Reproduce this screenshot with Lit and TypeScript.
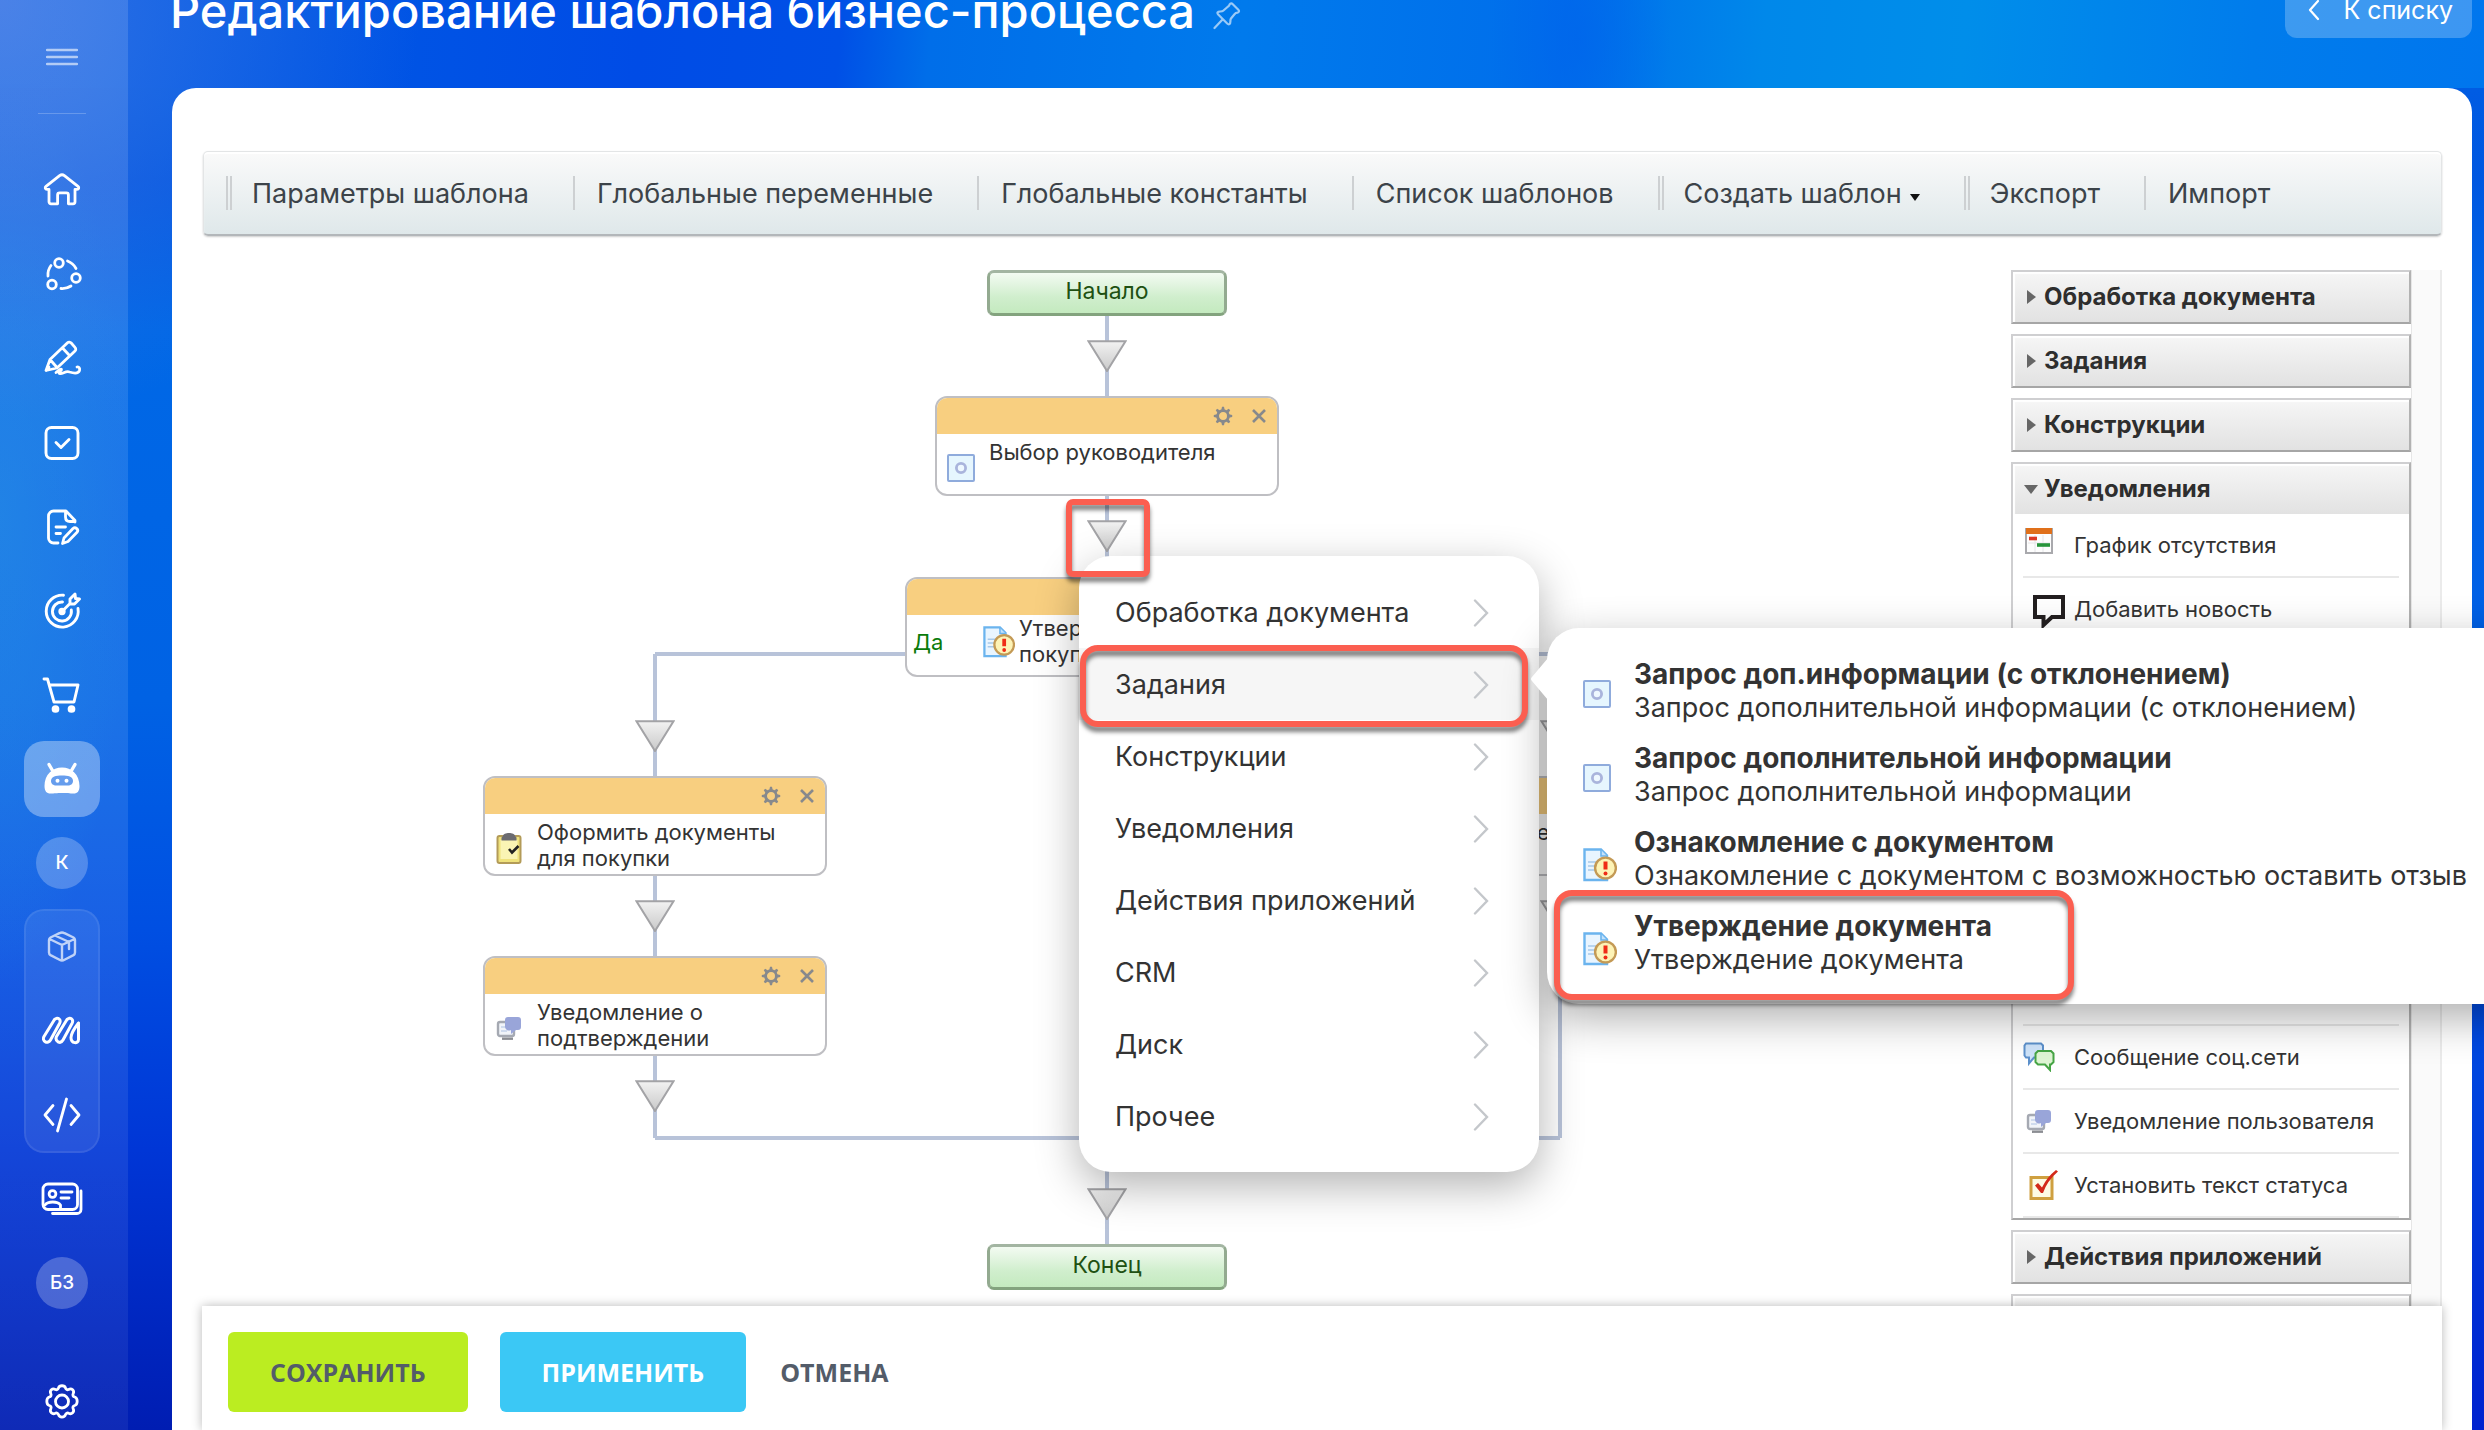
import { LitElement, html, svg, css, nothing, TemplateResult } from "lit";
import { customElement, property } from "lit/decorators.js";
import { classMap } from "lit/directives/class-map.js";
import { styleMap } from "lit/directives/style-map.js";

/* ---------- icon artwork ---------- */

const line = (box: string, w: number, h: number, body: unknown, stroke = 2) => html`
  <svg viewBox=${box} width=${w} height=${h} fill="none" stroke="currentColor" stroke-width=${stroke}
    stroke-linecap="round" stroke-linejoin="round" aria-hidden="true">${body}</svg>`;

const NAV: Record<string, TemplateResult> = {
  home: line("0 0 40 40", 40, 40, svg`<path d="M17.6 4.6a4 4 0 0 1 4.8 0L36 15.4c1.4 1.2.8 3-1 3h-2v12.4a2 2 0 0 1-2 2h-4.6v-9a2 2 0 0 0-2-2h-6.8a2 2 0 0 0-2 2v9H9a2 2 0 0 1-2-2V18.400H5c-1.800 0-2.400-1.800-1-3z"/>`, 2.800),
  share: line("0 0 40 40", 40, 40, svg`<circle cx="17" cy="8" r="4.300"/><circle cx="34" cy="23" r="4.300"/><circle cx="10" cy="29.500" r="4.300"/><path d="M9 10.500A15 15 0 0 0 6 21M25.500 6A16 16 0 0 1 34 13.500M19 33.500a16 16 0 0 0 10-2.500"/>`, 2.800),
  sign: line("0 0 40 40", 40, 40, svg`<path d="M25.500 3.800 8 20.500 4 31.500 15 29 33 12a2.500 2.500 0 0 0 0-3.600L29.200 4a2.600 2.600 0 0 0-3.700-.200zM20.500 9l7 7.500M8 20.500l7 8M4 31.500 7 28"/><path d="M14 33.500c3.500-3 5-4 5.500-3 .500 1.300-4 3-2 4 3 1 6-3 10-1.500 5 1.500 9 1.500 10-1.500.600-2-.500-4-2.500-3.500"/>`, 2.800),
  task: line("0 0 40 40", 40, 40, svg`<rect x="4" y="4.500" width="32" height="31" rx="5.500"/><path d="m14 19.500 5 5 8-8"/>`, 2.900),
  doc: line("0 0 40 40", 40, 40, svg`<path d="M16 36h-4.500A5 5 0 0 1 6.500 31V9a5 5 0 0 1 5-5H24l9 9.500v1.500M23.500 4.500V10c0 3 1.500 4.500 4.500 4.500h5M14 20h9.500M14 26.500h4.500"/><path d="m22 31 9-9.500c2.500-2.200 6.200 1.300 4 3.800L26 34.500 20.500 36.500z"/>`, 2.800),
  target: line("0 0 40 40", 40, 40, svg`<path d="M21.500 4.200A16 16 0 1 0 36 17.500"/><path d="M20.500 11A9.500 9.500 0 1 0 29.300 19"/><path d="m20 20.500 8-8V8l5-5 .500 4.500 4 .500-5 5h-4.500"/><circle cx="20" cy="20.500" r="2.200" fill="currentColor"/>`, 2.900),
  cart: line("0 0 40 40", 40, 40, svg`<path d="M2 4h3.500L12 27h20l4-17H8"/><circle cx="13.500" cy="34" r="2.400" fill="currentColor"/><circle cx="29.500" cy="34" r="2.400" fill="currentColor"/>`, 2.900),
  robot: html`<svg viewBox="0 0 40 40" width="40" height="40" aria-hidden="true">
    <path d="M7 5.500l3.500 6M33 5.500l-3.500 6" stroke="#fff" stroke-width="3.400" stroke-linecap="round"/>
    <path d="M20 8.500c9.500 0 17.500 7 17.500 18.500 0 5-2 7.500-6 7.500-4 0-6-.500-11.500-.500s-7.500.500-11.500.500c-4 0-6-2.500-6-7.500C2.500 15.500 10.500 8.500 20 8.500z" fill="#fff"/>
    <path d="M20 16.500c6 0 11 1 11 5.500 0 3-2.500 4.500-5 4.500H14c-2.500 0-5-1.500-5-4.500 0-4.500 5-5.500 11-5.500z" fill="#669ded"/>
    <circle cx="15.500" cy="21.800" r="2" fill="#fff"/><circle cx="24.500" cy="21.800" r="2" fill="#fff"/></svg>`,
  box: line("0 0 40 40", 40, 40, svg`<path d="M17.500 6.200 8.500 10.500A3 3 0 0 0 7 13v12.500a3 3 0 0 0 1.500 2.600l9 4.700a5 5 0 0 0 5 0l9-4.700a3 3 0 0 0 1.500-2.600V13a3 3 0 0 0-1.500-2.500l-9-4.300a5 5 0 0 0-5 0zM7.500 12l12.500 6 12.500-6M20 18v15M13 8.500l14 6.500v7"/>`, 2.400),
  wave: line("0 0 40 40", 40, 40, svg`<path d="M12.500 8.500c3.500-3 7 0 5 4L8.500 29c-2.500 4.500-9 1.500-6.500-3.500zM25 8.500c3.500-3 7 0 5 4L21 29c-2.500 4.500-8.500 1.500-6.500-3.500zM36.500 12v16.500c0 4.500-7.500 4.500-7.500-2 0-4 2.500-8 7.500-14.500"/>`, 3),
  code: line("0 0 40 40", 40, 40, svg`<path d="M11 10.500 3 20l8 9.500M29 10.500 37 20l-8 9.500M24.500 4 15.500 36"/>`, 2.800),
  card: line("0 0 44 40", 44, 40, svg`<rect x="3" y="5" width="34.500" height="25.500" rx="5"/><path d="M12.500 34.500H37a4 4 0 0 0 4-4V12"/><circle cx="12.500" cy="15" r="3.400"/><path d="M5 26c3-4 12.500-4 15.500 0v4M21 13h11M21 19h8"/>`, 2.800),
  gear: line("0 0 40 40", 40, 40, svg`<path d="M16.500 6c1-3 6-3 7 0 .400 1.500 1.800 2.200 3.200 1.400 3-1.600 6 1.400 4.500 4.300-.800 1.500 0 2.900 1.500 3.300 3.300 1 3.300 7.500 0 8.500-1.500.400-2.300 1.800-1.500 3.300 1.500 3-1.500 6-4.500 4.500-1.400-.800-2.800 0-3.200 1.400-1 3.300-6 3.300-7 0-.400-1.400-1.800-2.200-3.200-1.400-3 1.500-6-1.500-4.500-4.500.800-1.500 0-2.900-1.500-3.300-3.300-1-3.300-7.500 0-8.500 1.500-.400 2.300-1.800 1.500-3.300-1.500-2.900 1.500-5.900 4.500-4.300C14.700 8.200 16.100 7.500 16.500 6z"/><circle cx="20" cy="19.500" r="6.500"/>`, 2.800),
};

const GLYPH: Record<string, TemplateResult> = {
  form: html`<svg viewBox="0 0 28 28" width="28" height="28" aria-hidden="true">
    <rect x="1" y="1" width="26" height="26" rx="1" fill="#e6f6fe" stroke="#8fabdc" stroke-width="2"/>
    <circle cx="14" cy="14" r="4.600" fill="#eef8ff" stroke="#a9b4dc" stroke-width="2.800"/></svg>`,
  approve: html`<svg viewBox="0 0 34 34" width="34" height="34" aria-hidden="true">
    <path d="M1.500 1.500H18l6 6V32H1.500z" fill="#e9f5ff" stroke="#6bb4ee" stroke-width="2.400"/>
    <path d="M18 2v6h6" fill="#c4e2fb" stroke="#6bb4ee" stroke-width="1.600"/>
    <path d="M5 14h9M5 18h7M5 22h7" stroke="#a7c9ea" stroke-width="1.600"/>
    <circle cx="22.500" cy="20" r="10.400" fill="#fdf3b6" stroke="#c49a55" stroke-width="2.400"/>
    <path d="M22.500 13.500v8" stroke="#ef2c16" stroke-width="4"/><circle cx="22.500" cy="25.500" r="2" fill="#ef2c16"/></svg>`,
  clip: html`<svg viewBox="0 0 28 32" width="28" height="32" aria-hidden="true">
    <rect x="2.500" y="4" width="23" height="27" rx="2" fill="#efe27c" stroke="#b39b58" stroke-width="2"/>
    <rect x="5.500" y="8" width="17" height="19" fill="#faf4b4"/>
    <path d="M8 4c0-4 12-4 12 0l1.500 1.500v3h-15v-3z" fill="#6b6b70"/>
    <path d="m14 17 3 3.500 6.500-6.500" fill="none" stroke="#222" stroke-width="2.600"/></svg>`,
  notify: html`<svg viewBox="0 0 26 24" width="26" height="24" aria-hidden="true">
    <rect x="2" y="6" width="16" height="14" rx="2" fill="#f1f4f9" stroke="#a5a9b2" stroke-width="2.400"/>
    <path d="M6 22.700h11" stroke="#8b8d92" stroke-width="2.400"/>
    <path d="M5 11h7M5 15h6" stroke="#c4d2ea" stroke-width="1.600"/>
    <path d="M12 1h10a3 3 0 0 1 3 3v7a3 3 0 0 1-3 3h-2l-5 4v-4a4 4 0 0 1-6-3V4a3 3 0 0 1 3-3z" fill="#99a5d9"/></svg>`,
  calendar: html`<svg viewBox="0 0 28 26" width="28" height="26" aria-hidden="true">
    <rect x="1" y="1" width="26" height="24" fill="#fdfdfd" stroke="#a9a9ad" stroke-width="2"/>
    <path d="M1 0h26v6H1z" fill="#e0701a"/><path d="M3 15h22M10 7v17M18 7v17" stroke="#e5e5e8"/>
    <path d="M4 10.500h8" stroke="#dc3a24" stroke-width="3.600"/><path d="M12 17h13" stroke="#28953b" stroke-width="3.600"/></svg>`,
  news: html`<svg viewBox="0 0 32 34" width="32" height="34" aria-hidden="true">
    <path d="M2 2h28v20H19l-8.500 8v-8H2z" fill="#fff" stroke="#231f20" stroke-width="4"/></svg>`,
  social: html`<svg viewBox="0 0 32 30" width="32" height="30" aria-hidden="true">
    <path d="M3 1.500h15l2 2v10l-2 2h-7l-5 6v-6H3l-1.500-2v-10z" fill="#cfe4fa" stroke="#5d91cc" stroke-width="2"/>
    <path d="M15 9h13l2.500 2.500V20L28 22.500h-1v5.500l-5-5.500h-7L12.500 20v-8.500z" fill="#dff5d4" stroke="#46a545" stroke-width="2"/></svg>`,
  status: html`<svg viewBox="0 0 30 30" width="30" height="30" aria-hidden="true">
    <rect x="2" y="7.500" width="21" height="21" fill="#fdfbe4" stroke="#cfa040" stroke-width="3"/>
    <path d="M6 15.500 9 13l4 4.500Q18 7 27 0l2 1.500Q18 11 14 23h-2z" fill="#d32a1a"/></svg>`,
};

const GEAR = html`<svg viewBox="0 0 20 20" width="20" height="20" aria-hidden="true">
  <circle cx="10" cy="10" r="5.400" fill="none" stroke="currentColor" stroke-width="2.800"/>
  ${[0, 45, 90, 135, 180, 225, 270, 315].map(a => svg`<path d="M8.300 4 9 .800h2L11.700 4z" fill="currentColor" transform="rotate(${a} 10 10)"/>`)}</svg>`;
const CROSS = html`<svg viewBox="0 0 16 16" width="16" height="16" aria-hidden="true">
  <path d="m2 2 12 12M14 2 2 14" stroke="currentColor" stroke-width="2.600"/></svg>`;
const CHEVRON = html`<svg class="chev" viewBox="0 0 16 28" width="16" height="28" aria-hidden="true">
  <path d="m2 1.500 12 12.500L2 26.500" fill="none" stroke="#c4c7cb" stroke-width="2.400" stroke-linecap="round"/></svg>`;
const DROP = html`<svg viewBox="0 0 40 32" width="40" height="32" aria-hidden="true">
  <defs><linearGradient id="g" x1="0" y1="0" x2="0" y2="1"><stop offset="0" stop-color="#f2f2f2"/><stop offset="1" stop-color="#c9c9c9"/></linearGradient></defs>
  <path d="M1.500 1.200h37L20 31z" fill="url(#g)" stroke="#a3a3a6" stroke-width="2"/></svg>`;

/* ---------- left navigation ---------- */

@customElement("side-nav")
class SideNav extends LitElement {
  static styles = css`
    :host { display: flex; flex-direction: column; align-items: center; width: 124px; padding-right: 4px;
      background: linear-gradient(rgba(255,255,255,.13), rgba(255,255,255,.1) 60%, rgba(255,255,255,.06)); }
    .top { display: flex; flex-direction: column; align-items: center; height: 153px; }
    button { all: unset; height: 113px; display: flex; align-items: center; color: rgba(255,255,255,.6); cursor: pointer; }
    .rule { width: 48px; height: 1px; background: rgba(255,255,255,.22); }
    .list { display: flex; flex-direction: column; gap: 8px; flex: 1; }
    a { display: flex; align-items: center; justify-content: center; width: 76px; height: 76px; color: #fff;
      text-decoration: none; border-radius: 20px; }
    a.active { background: rgba(255,255,255,.34); }
    .group { display: flex; flex-direction: column; gap: 8px; border-radius: 20px; background: rgba(255,255,255,.08);
      box-shadow: inset 0 0 0 2px rgba(255,255,255,.08); }
    .dim { color: rgba(255,255,255,.7); }
    .badge { display: flex; align-items: center; justify-content: center; width: 52px; height: 52px; border-radius: 50%;
      background: rgba(255,255,255,.24); font: 500 19px/24px Inter, sans-serif; }
    .last { margin-top: auto; margin-bottom: -10px; }
  `;
  private item(name: string, label: string, cls = "") {
    return html`<a href="#" class=${cls} aria-label=${label}>${NAV[name]}</a>`;
  }
  render() {
    return html`
      <div class="top">
        <button aria-label="Меню">${line("0 0 32 20", 32, 20, svg`<path d="M1 3h30M1 10h30M1 17h30"/>`, 2.4)}</button>
        <div class="rule"></div>
      </div>
      <nav class="list">
        ${this.item("home", "Главная")}${this.item("share", "Совместная работа")}${this.item("sign", "Подпись")}
        ${this.item("task", "Задачи")}${this.item("doc", "Документы")}${this.item("target", "CRM")}
        ${this.item("cart", "Магазин")}${this.item("robot", "Автоматизация", "active")}
        <a href="#"><span class="badge">К</span></a>
        <div class="group">
          ${this.item("box", "Склад", "dim")}${this.item("wave", "Маркетинг")}${this.item("code", "Разработчикам")}
        </div>
        ${this.item("card", "Компания")}
        <a href="#"><span class="badge">БЗ</span></a>
        ${this.item("gear", "Настройки", "last")}
      </nav>`;
  }
}

/* ---------- toolbar ---------- */

interface Tool { text: string; double?: boolean; menu?: boolean }
const TOOLS: Tool[] = [
  { text: "Параметры шаблона", double: true },
  { text: "Глобальные переменные" },
  { text: "Глобальные константы" },
  { text: "Список шаблонов" },
  { text: "Создать шаблон", double: true, menu: true },
  { text: "Экспорт", double: true },
  { text: "Импорт" },
];

@customElement("template-toolbar")
class TemplateToolbar extends LitElement {
  static styles = css`
    :host { display: flex; align-items: center; height: 82px; padding-left: 22px; border-radius: 5px;
      border: 1px solid #e3e5e6; border-bottom: 2px solid #b3b7ba; background: linear-gradient(#fafafa, #dfe8ea);
      box-shadow: 0 1px 2px rgba(0,0,0,.2), inset 0 2px 1px #fff; }
    .tool { display: flex; align-items: center; padding-right: 44px; }
    .bar { width: 0; height: 34px; border-left: 2px solid #cdd0d2; margin-right: 22px; }
    .double { width: 2px; border-right: 2px solid #cdd0d2; margin-right: 20px; }
    button { all: unset; display: flex; align-items: center; gap: 8px; padding-top: 2px; font: 400 27px/36px Inter, sans-serif; color: #3c4349; cursor: pointer; white-space: nowrap; }
    .caret { border: 5px solid transparent; border-top: 7px solid #111; border-bottom: 0; margin-top: 6px; }
  `;
  render() {
    return TOOLS.map(t => html`<div class="tool">
      <span class=${classMap({ bar: true, double: !!t.double })}></span>
      <button>${t.text}${t.menu ? html`<span class="caret"></span>` : nothing}</button></div>`);
  }
}

/* ---------- diagram ---------- */

@customElement("flow-node")
class FlowNode extends LitElement {
  @property() text = "";
  @property() glyph = "form";
  @property() branch = "";
  static styles = css`
    :host { display: flex; flex-direction: column; width: 340px; height: 96px; border: 2px solid #bfbfc3; border-radius: 12px;
      background: #fff; overflow: hidden; }
    :host([wide]) { width: 400px; }
    .head { display: flex; justify-content: flex-end; align-items: center; gap: 18px; height: 36px; padding-right: 10px; background: #f8cf80; }
    button { all: unset; display: flex; color: #87898c; cursor: pointer; }
    .body { display: flex; flex: 1; align-items: flex-start; padding: 5px 8px 0 8px; }
    .glyph { display: flex; justify-content: center; align-items: center; width: 32px; height: 28px; margin: 15px 12px 0 0; }
    .body p { margin: 0; font: 400 22px/26px Inter, sans-serif; color: #333; flex: 1; }
    .branch { font: 400 22px/30px Inter, sans-serif; color: #0a7b0a; width: 70px; padding-top: 12px; }
    :host([wide]) .body { padding-top: 0; padding-left: 6px; }
    :host([wide]) p { padding-right: 60px; }
    :host([wide]) .glyph { margin-right: 4px; margin-top: 13px; }
  `;
  render() {
    return html`
      <div class="head"><button aria-label="Настроить">${GEAR}</button><button aria-label="Удалить">${CROSS}</button></div>
      <div class="body">
        ${this.branch ? html`<span class="branch">${this.branch}</span>` : nothing}
        <span class="glyph">${GLYPH[this.glyph]}</span><p>${this.text}</p>
      </div>`;
  }
}

@customElement("flow-menu")
class FlowMenu extends LitElement {
  static styles = css`
    :host { display: block; width: 460px; }
    ul { list-style: none; margin: 0; padding: 20px 0; background: #fff; border-radius: 32px; box-shadow: 0 14px 44px rgba(0,0,0,.3); }
    button { all: unset; box-sizing: border-box; display: flex; align-items: center; justify-content: space-between; width: 100%; height: 72px;
      padding: 2px 50px 0 36px; font: 400 27px/36px Inter, sans-serif; color: #333; cursor: pointer; }
    .on { background: #f6f6f6; }
  `;
  render() {
    const items = ["Обработка документа", "Задания", "Конструкции", "Уведомления", "Действия приложений", "CRM", "Диск", "Прочее"];
    return html`<ul>${items.map(t => html`<li><button class=${t === "Задания" ? "on" : ""}>${t}${CHEVRON}</button></li>`)}</ul>`;
  }
}

@customElement("flow-submenu")
class FlowSubmenu extends LitElement {
  static styles = css`
    :host { display: block; width: 1000px; position: relative; }
    ul { position: relative; list-style: none; margin: 0; padding: 20px 0; background: #fff; border-radius: 32px; box-shadow: 0 14px 44px rgba(0,0,0,.32); }
    .tip { position: absolute; left: -17px; top: 30px; z-index: 1; }
    button { all: unset; box-sizing: border-box; display: flex; width: 100%; height: 84px; padding-left: 34px; cursor: pointer; }
    .glyph { display: flex; align-items: center; justify-content: center; width: 36px; height: 34px; margin: 32px 17px 0 0; padding-left: 2px; box-sizing: border-box; }
    .form { width: 28px; margin: 29px 23px 0 2px; padding: 0; }
    .words { display: flex; flex-direction: column; padding-top: 10px; font: 400 27px/33px Inter, sans-serif; color: #333; white-space: nowrap; }
    b { font-weight: 700; font-size: 28px; }
  `;
  render() {
    const items = [
      ["form", "Запрос доп.информации (с отклонением)", "Запрос дополнительной информации (с отклонением)"],
      ["form", "Запрос дополнительной информации", "Запрос дополнительной информации"],
      ["approve", "Ознакомление с документом", "Ознакомление с документом с возможностью оставить отзыв"],
      ["approve", "Утверждение документа", "Утверждение документа"],
    ];
    return html`
      <svg class="tip" viewBox="0 0 18 42" width="18" height="42" aria-hidden="true"><path d="M18 0v42L2 23q-2-2 0-4z" fill="#fff"/></svg>
      <ul>${items.map(([g, a, b]) => html`<li><button><span class="glyph ${g}">${GLYPH[g]}</span>
        <span class="words"><b>${a}</b><span>${b}</span></span></button></li>`)}</ul>`;
  }
}

const at = (x: number, y: number) => styleMap({ left: `${x}px`, top: `${y}px` });

@customElement("flow-diagram")
class FlowDiagram extends LitElement {
  static styles = css`
    :host { display: block; position: relative; width: 1254px; height: 1036px; margin: 0 auto; }
    .wires { position: absolute; inset: 0; }
    .spot { position: absolute; }
    .drop { all: unset; position: absolute; display: flex; cursor: pointer; }
    .end { position: absolute; box-sizing: border-box; width: 240px; height: 46px; border: 3px solid #93aa90; border-top-color: #a3b5a2; border-bottom-color: #83a37e;
      border-radius: 7px; background: linear-gradient(#f3fbf2, #d0eecd 60%, #c4eabf); font: 400 23px/36px Inter, sans-serif; color: #205012; text-align: center; }
    .mark { position: absolute; box-sizing: border-box; border: 6px solid #fb5e50; border-radius: 18px; filter: drop-shadow(0 5px 2px rgba(0,0,0,.5)); pointer-events: none; }
    .m-arrow { width: 84px; height: 78px; border-radius: 7px; }
    .m-task { width: 448px; height: 82px; }
    .m-approve { width: 520px; height: 110px; }
  `;
  render() {
    const drops = [[607, 70], [607, 250], [155, 450], [155, 630], [155, 810], [1060, 450], [1060, 630], [607, 918]];
    const wires = [[625, 40, 4, 96], [625, 226, 4, 90], [175, 382, 910, 4], [173, 384, 4, 484], [1078, 384, 4, 484], [175, 866, 905, 4], [625, 866, 4, 110]];
    return html`
      <svg class="wires" viewBox="0 0 1254 1036" width="1254" height="1036" aria-hidden="true">
        ${wires.map(([x, y, w, h]) => svg`<rect x=${x} y=${y} width=${w} height=${h} fill="#b8c3d9"/>`)}
      </svg>
      <div class="end" style=${at(507, 0)}>Начало</div>
      <flow-node class="spot" style=${at(455, 126)} text="Выбор руководителя"></flow-node>
      <flow-node class="spot" style=${at(425, 307)} wide branch="Да" glyph="approve" text="Утверждение покупки"></flow-node>
      <flow-node class="spot" style=${at(3, 506)} glyph="clip" text="Оформить документы для покупки"></flow-node>
      <flow-node class="spot" style=${at(3, 686)} glyph="notify" text="Уведомление о подтверждении"></flow-node>
      <flow-node class="spot" style=${at(908, 506)} glyph="notify" text="Уведомление"></flow-node>
      ${drops.map(([x, y]) => html`<button class="drop" aria-label="Добавить действие" style=${at(x, y)}>${DROP}</button>`)}
      <div class="end" style=${at(507, 974)}>Конец</div>
      <flow-menu class="spot" style=${at(599, 286)}></flow-menu>
      <flow-submenu class="spot" style=${at(1067, 358)}></flow-submenu>
      <div class="mark m-arrow" style=${at(586, 229)}></div>
      <div class="mark m-task" style=${at(600, 375)}></div>
      <div class="mark m-approve" style=${at(1074, 620)}></div>`;
  }
}

/* ---------- activity palette ---------- */

@customElement("activity-palette")
class ActivityPalette extends LitElement {
  static styles = css`
    :host { display: flex; contain: size; overflow: hidden; }
    .groups { display: flex; flex-direction: column; gap: 10px; width: 400px; height: max-content; }
    .track { flex: 1; border-left: 1px solid #e6e6e6; border-right: 2px solid #ebebeb; background: #fafafa; }
    .group { border: 2px solid #cfcfd1; border-right-color: #b2b2b2; border-bottom-color: #a6a6a6; background: #fff; }
    button { all: unset; box-sizing: border-box; display: flex; align-items: center; width: 100%; height: 50px; padding-left: 14px;
      background: linear-gradient(#f6f6f6, #e2e2e2); box-shadow: inset 2px 2px 1px #fff; font: 700 24px/32px Inter, sans-serif; color: #2e2e2e; cursor: pointer; }
    .tri { width: 17px; display: flex; }
    .tri svg { display: block; }
    .open .tri { width: 21px; margin-left: -4px; }
    ul { list-style: none; margin: 0; padding: 0 10px; }
    li { box-sizing: border-box; height: 64px; display: flex; align-items: center; border-bottom: 2px solid #e8e8e8; font: 400 22px/28px Inter, sans-serif; color: #333; white-space: nowrap; }
    .pic { display: flex; align-items: center; justify-content: center; width: 32px; height: 34px; margin-right: 19px; }
    .calendar { margin-bottom: 8px; }
    .news { margin: 6px 9px 0 10px; }
    .status { margin-left: 5px; margin-right: 14px; }
    .rest { height: 384px; }
  `;
  private head(t: string, open = false) {
    return html`<button aria-expanded=${open}><span class="tri">${open
      ? html`<svg width="16" height="9" viewBox="0 0 16 9"><path d="M1 0h14L8 9z" fill="#666"/></svg>`
      : html`<svg width="9" height="16" viewBox="0 0 9 16"><path d="M0 1v14l9-7z" fill="#666"/></svg>`}</span>${t}</button>`;
  }
  private row(g: string, t: string) { return html`<li><span class="pic ${g}">${GLYPH[g]}</span>${t}</li>`; }
  render() {
    return html`
      <div class="groups">
        ${["Обработка документа", "Задания", "Конструкции"].map(t => html`<div class="group">${this.head(t)}</div>`)}
        <div class="group open">${this.head("Уведомления", true)}
          <ul>${this.row("calendar", "График отсутствия")}${this.row("news", "Добавить новость")}
            <li class="rest"></li>
            ${this.row("social", "Сообщение соц.сети")}${this.row("notify", "Уведомление пользователя")}${this.row("status", "Установить текст статуса")}</ul>
        </div>
        <div class="group">${this.head("Действия приложений")}</div>
        <div class="group">${this.head("")}</div>
      </div>
      <div class="track"></div>`;
  }
}

/* ---------- page ---------- */

@customElement("app-root")
class AppRoot extends LitElement {
  static styles = css`
    :host { display: flex; min-height: 100vh; overflow: hidden; font-family: Inter, "Open Sans", sans-serif; contain: paint;
      background:
        radial-gradient(90px 170px at 1580px 40px, rgba(0,98,236,.6), transparent),
        radial-gradient(420px 420px at 0 0, rgba(50,112,228,.95), transparent),
        radial-gradient(130px 460px at 0 520px, rgba(6,118,226,.8), transparent),
        linear-gradient(transparent 100px, #0060e6 640px, #0048e0 1050px, #0022cf 1430px) right / 40px 100% no-repeat,
        linear-gradient(95deg, #0062e6, #0057e4 300px, #004ce6 640px, #0050e6 840px, #006ee9 930px, #007aec 1240px, #006eeb 1560px, #0088ea 1760px, #008eea 1960px, #007cec 2250px, #0076ee) top / 100% 88px no-repeat,
        linear-gradient(#0062e6, #0056e0 180px, #0068e6 330px, #0062e4 700px, #004fe2 930px, #0036d6 1150px, #001db2 1430px); }
    main { flex: 1; min-width: 0; margin: 0 12px 0 44px; display: flex; flex-direction: column; }
    header { display: flex; align-items: flex-start; height: 88px; }
    h1 { margin: -15px 0 0 -2px; font: 500 47px/52px Inter, sans-serif; color: #fff; white-space: nowrap; }
    .pin { all: unset; margin: 2px auto 0 18px; color: rgba(255,255,255,.6); cursor: pointer; }
    .back { display: flex; align-items: center; gap: 24px; height: 56px; margin-top: -18px; padding: 0 19px 0 23px; border-radius: 12px;
      background: rgba(255,255,255,.24); color: #fff; text-decoration: none; font: 400 25px/36px Inter, sans-serif; }
    .panel { flex: 1; display: flex; flex-direction: column; border-radius: 24px 24px 0 0; background: #fff; padding: 63px 30px 0 31px; }
    .work { display: grid; grid-template-columns: 1fr 431px; margin-top: 34px; }
    .canvas { position: relative; z-index: 1; min-width: 0; }
    footer { display: flex; align-items: flex-start; gap: 32px; flex: 1; min-height: 124px; box-sizing: border-box; padding: 26px 26px 0 26px; margin: 0 0 0 -1px; background: #fff;
      box-shadow: 0 0 10px rgba(0,0,0,.28); clip-path: inset(-14px -14px 0 -14px); }
    footer button { all: unset; height: 80px; padding: 0 42px; border-radius: 6px; font: 700 25px/80px "Open Sans", sans-serif; color: #535c69; text-transform: uppercase; cursor: pointer; }
    footer .save { background: #bbed21; }
    footer .apply { background: #3bc8f5; color: #fff; }
    footer .cancel { padding: 0 2px; }
  `;
  render() {
    return html`
      <side-nav></side-nav>
      <main>
        <header>
          <h1>Редактирование шаблона бизнес-процесса</h1>
          <button class="pin" aria-label="Закрепить">${line("0 0 28 28", 28, 28, svg`<path d="M16.500 2.500c1-1.500 2.300-1.300 3.300-.300l5.500 5.500c1.200 1.200.700 2.800-.800 3-1.500.100-2 .300-3 1.500l-3.500 4.300c-.700.900-.600 1.600-.600 3 0 2.700-1.500 3.600-3.200 2l-9-9c-1.500-1.600-.600-3 1.800-3 1.500 0 2.300.100 3.200-.700l4.300-3.800c1.200-1 2-1 2-2.500M9.500 17.500 1.500 26"/>`, 2.2)}</button>
          <a class="back" href="#">${line("0 0 12 22", 12, 22, svg`<path d="M10 2 2 11l8 9"/>`, 2.2)}К списку</a>
        </header>
        <section class="panel">
          <template-toolbar></template-toolbar>
          <div class="work">
            <div class="canvas"><flow-diagram></flow-diagram></div>
            <activity-palette></activity-palette>
          </div>
          <footer>
            <button class="save">Сохранить</button>
            <button class="apply">Применить</button>
            <button class="cancel">Отмена</button>
          </footer>
        </section>
      </main>`;
  }
}
